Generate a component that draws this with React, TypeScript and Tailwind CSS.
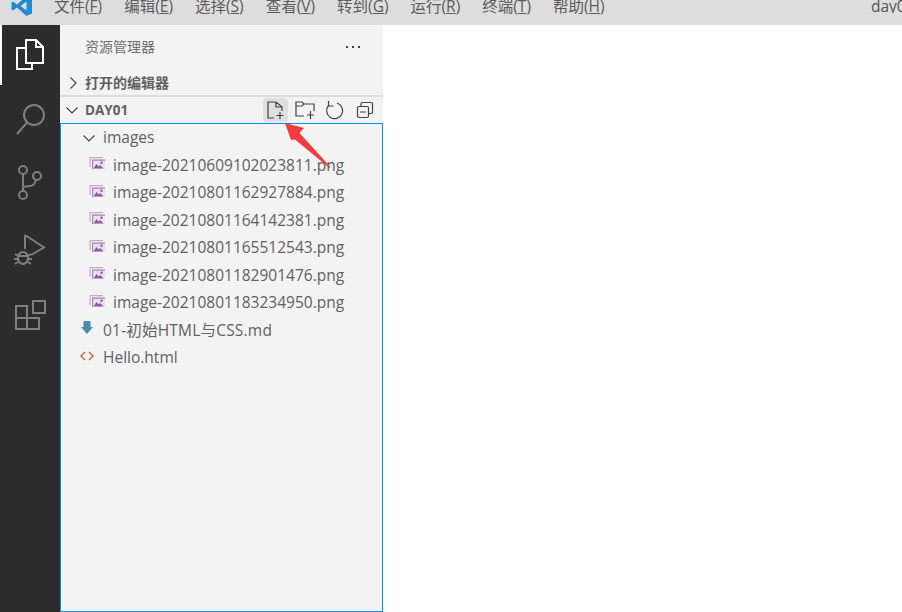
import React from "react";

const font = { fontFamily: '"Open Sans","Noto Sans CJK SC",sans-serif' };

const menus: [string, string][] = [
  ["文件", "F"], ["编辑", "E"], ["选择", "S"], ["查看", "V"], ["转到", "G"], ["运行", "R"], ["终端", "T"], ["帮助", "H"],
];

const images = [
  "image-20210609102023811.png",
  "image-20210801162927884.png",
  "image-20210801164142381.png",
  "image-20210801165512543.png",
  "image-20210801182901476.png",
  "image-20210801183234950.png",
];

function ImgIcon() {
  return (
    <svg width="16" height="16" viewBox="0 0 16 16" className="mb-[2px] shrink-0">
      <path d="M0.500 1h13.500v1.200H1.700V11H0.500z" fill="#c9a3d3" />
      <path d="M3 3.500h13V13H3z" fill="#e9e0ee" />
      <path d="M3 3.500h13v1.200H4.200V13H3z" fill="#a884b8" />
      <path d="M4.500 12.500l3-4.500 2.200 2.500 1.500-1.500 3.300 3.500z" fill="#8a5da3" />
      <circle cx="12.500" cy="6.800" r="1.200" fill="#8a5da3" />
    </svg>
  );
}

function Chevron({ open }: { open?: boolean }) {
  return (
    <svg width="16" height="16" viewBox="0 0 16 16" fill="none" stroke="#424242" strokeWidth="1.100" className="shrink-0">
      {open ? <path d="M2.500 5.500L8 11l5.500-5.500" /> : <path d="M5.500 2.500L11 8l-5.500 5.500" />}
    </svg>
  );
}

function Row({ children, pad }: { children: React.ReactNode; pad: string }) {
  return <div className={`flex h-[27.5px] items-center text-[15.5px] text-[#616161] ${pad}`}>{children}</div>;
}

export default function App() {
  return (
    <div className="flex h-[612px] w-[902px] flex-col overflow-hidden bg-white" style={font}>
      <div className="flex h-[25px] shrink-0 items-start overflow-hidden bg-[#dddddd] text-[15.5px] leading-[13px] text-[#5c5c5c]">
        <svg width="22" height="20" viewBox="0 0 22 20" className="ml-[11px] mt-[-4px] shrink-0">
          <path d="M15.500 0L21 2.500v15L15.500 20 6 11.500 2 14.500 0.500 13.500V6.500L2 5.500l4 3z" fill="#1f8ad2" />
          <path d="M15.500 5.500L9.500 10l6 4.500z" fill="#dddddd" />
        </svg>
        <div className="ml-[21px] flex gap-[22px]">
          {menus.map(([m, k]) => (
            <span key={m} className="whitespace-nowrap">
              {m}(<span className="underline">{k}</span>)
            </span>
          ))}
        </div>
        <span className="ml-auto w-[31px] overflow-hidden whitespace-nowrap text-[#555555]">day01</span>
      </div>
      <div className="flex min-h-0 flex-1">
        <div className="flex w-[60px] shrink-0 flex-col bg-[#2c2c2c]">
          <div className="flex h-[60px] shrink-0 items-center justify-center border-l-2 border-white pr-[2px]">
            <svg width="30" height="32" viewBox="0 0 30 32" fill="none" stroke="#ffffff" strokeWidth="2">
              <path d="M11 1h10l7 7v16H11z" fill="#2c2c2c" />
              <path d="M21 1v7h7" />
              <path d="M11 9H2v21h15v-6" />
            </svg>
          </div>
          <div className="flex h-[70px] shrink-0 items-center justify-center">
            <svg width="32" height="32" viewBox="0 0 32 32" fill="none" stroke="#7f7f7f" strokeWidth="2">
              <circle cx="20" cy="11" r="10" />
              <path d="M13 18.500L3 30" />
            </svg>
          </div>
          <div className="flex h-[55px] shrink-0 items-center justify-center">
            <svg width="30" height="35" viewBox="0 0 30 35" fill="none" stroke="#7f7f7f" strokeWidth="2">
              <circle cx="8" cy="5" r="4" />
              <circle cx="8" cy="30" r="4" />
              <circle cx="22" cy="11" r="4" />
              <path d="M8 9v17M8 22c3 0 3-1 7-1 3 0 5-2 6-6" />
            </svg>
          </div>
          <div className="flex h-[82px] shrink-0 items-center justify-center">
            <svg width="32" height="34" viewBox="0 0 32 34" fill="none" stroke="#7f7f7f" strokeWidth="2">
              <path d="M11 1L30 13.500 17 21M11 1V15" />
              <ellipse cx="9" cy="24" rx="5" ry="6" />
              <path d="M4 22h10M1 20l3 2M17 20l-3 2M0 25h4M14 25h4M1 30l3-2M17 30l-3-2" />
            </svg>
          </div>
          <div className="flex h-[46px] shrink-0 items-center justify-center">
            <svg width="32" height="32" viewBox="0 0 32 32" fill="none" stroke="#7f7f7f" strokeWidth="2">
              <rect x="19" y="2" width="12" height="12" />
              <path d="M2 7h11v23H2zM2 19h23v11H2zM13 19v11" />
            </svg>
          </div>
        </div>
        <div className="flex w-[323px] shrink-0 flex-col bg-[#f3f3f3]">
          <div className="flex h-[45px] shrink-0 items-center pb-[2px] pl-[25px] pr-[20px] text-[14px] text-[#6f6f6f]">
            <span>资源管理器</span>
            <svg width="18" height="6" viewBox="0 0 18 6" className="ml-auto" fill="#424242">
              <rect x="1" y="2" width="2" height="2" />
              <rect x="7" y="2" width="2" height="2" />
              <rect x="13" y="2" width="2" height="2" />
            </svg>
          </div>
          <div className="flex h-[27px] shrink-0 items-center gap-[1px] border-b-2 border-[#dcdcdc] pl-[5px] text-[14px] font-bold text-[#616161]">
            <Chevron />
            <span className="ml-[3px]">打开的编辑器</span>
          </div>
          <div className="flex h-[26px] shrink-0 items-center pl-[4px] text-[13.500px] font-bold text-[#616161]">
            <Chevron open />
            <span className="ml-[5px] mt-[1px]">DAY01</span>
            <div className="relative ml-auto flex h-full items-center pr-[3px]">
              <div className="flex h-[25px] w-[30px] items-center justify-center">
                <div className="flex h-[24px] w-[25px] items-center justify-center rounded-[4px] bg-[#dfdfdf]">
                  <svg width="20" height="20" viewBox="0 0 20 20" fill="none" stroke="#424242" strokeWidth="1.200">
                    <path d="M9 18H3V2h8l6 5v4M11 2v5h6M15 12v7M11.500 15.500h7" />
                  </svg>
                </div>
              </div>
              <div className="flex w-[30px] justify-center">
                <svg width="22" height="20" viewBox="0 0 22 20" fill="none" stroke="#424242" strokeWidth="1.200">
                  <path d="M10 16H2V2h6l2 2h10v7M2 6h6l2-2M16.500 11v8M13 15h7" />
                </svg>
              </div>
              <div className="flex w-[30px] justify-center">
                <svg width="20" height="20" viewBox="0 0 20 20" fill="none" stroke="#424242" strokeWidth="1.200">
                  <path d="M12 3a8 8 0 1 1-8.500 2.500M3.500 1v5h5" />
                </svg>
              </div>
              <div className="flex w-[30px] justify-center">
                <svg width="20" height="20" viewBox="0 0 20 20" fill="none" stroke="#424242" strokeWidth="1.200">
                  <rect x="2.500" y="6.500" width="11" height="11" rx="1.500" />
                  <path d="M6 6V4a1.500 1.500 0 0 1 1.500-1.500H16A1.500 1.500 0 0 1 17.500 4v8a1.500 1.500 0 0 1-1.500 1.500h-2M5 12h6" />
                </svg>
              </div>
              <svg width="50" height="50" viewBox="0 0 50 50" className="absolute left-[23px] top-[25px] z-10">
                <path d="M2 1L21 6 16.500 11 47.500 45 46.500 46 12 17.500 8 18z" fill="#f13c3f" />
              </svg>
            </div>
          </div>
          <div className="min-h-0 flex-1 border border-[#0090f1]">
            <Row pad="pl-[20px]">
              <Chevron open />
              <span className="ml-[6px]">images</span>
            </Row>
            {images.map((n) => (
              <Row key={n} pad="pl-[28px]">
                <ImgIcon />
                <span className="ml-[8px]">{n}</span>
              </Row>
            ))}
            <Row pad="pl-[18px]">
              <svg width="16" height="16" viewBox="0 0 16 16" className="mb-[3px] shrink-0">
                <path d="M4.500 0h7v6H14L8 13 2 6h2.500z" fill="#4a8cab" />
              </svg>
              <span className="ml-[8px] tracking-[0.2px]">01-初始HTML与CSS.md</span>
            </Row>
            <Row pad="pl-[18px]">
              <svg width="16" height="16" viewBox="0 0 16 16" fill="none" stroke="#c7643d" strokeWidth="1.400" className="mb-[3px] shrink-0">
                <path d="M6 4L2 8l4 4M10 4l4 4-4 4" />
              </svg>
              <span className="ml-[8px]">Hello.html</span>
            </Row>
          </div>
        </div>
        <div className="flex-1 bg-white" />
      </div>
    </div>
  );
}
